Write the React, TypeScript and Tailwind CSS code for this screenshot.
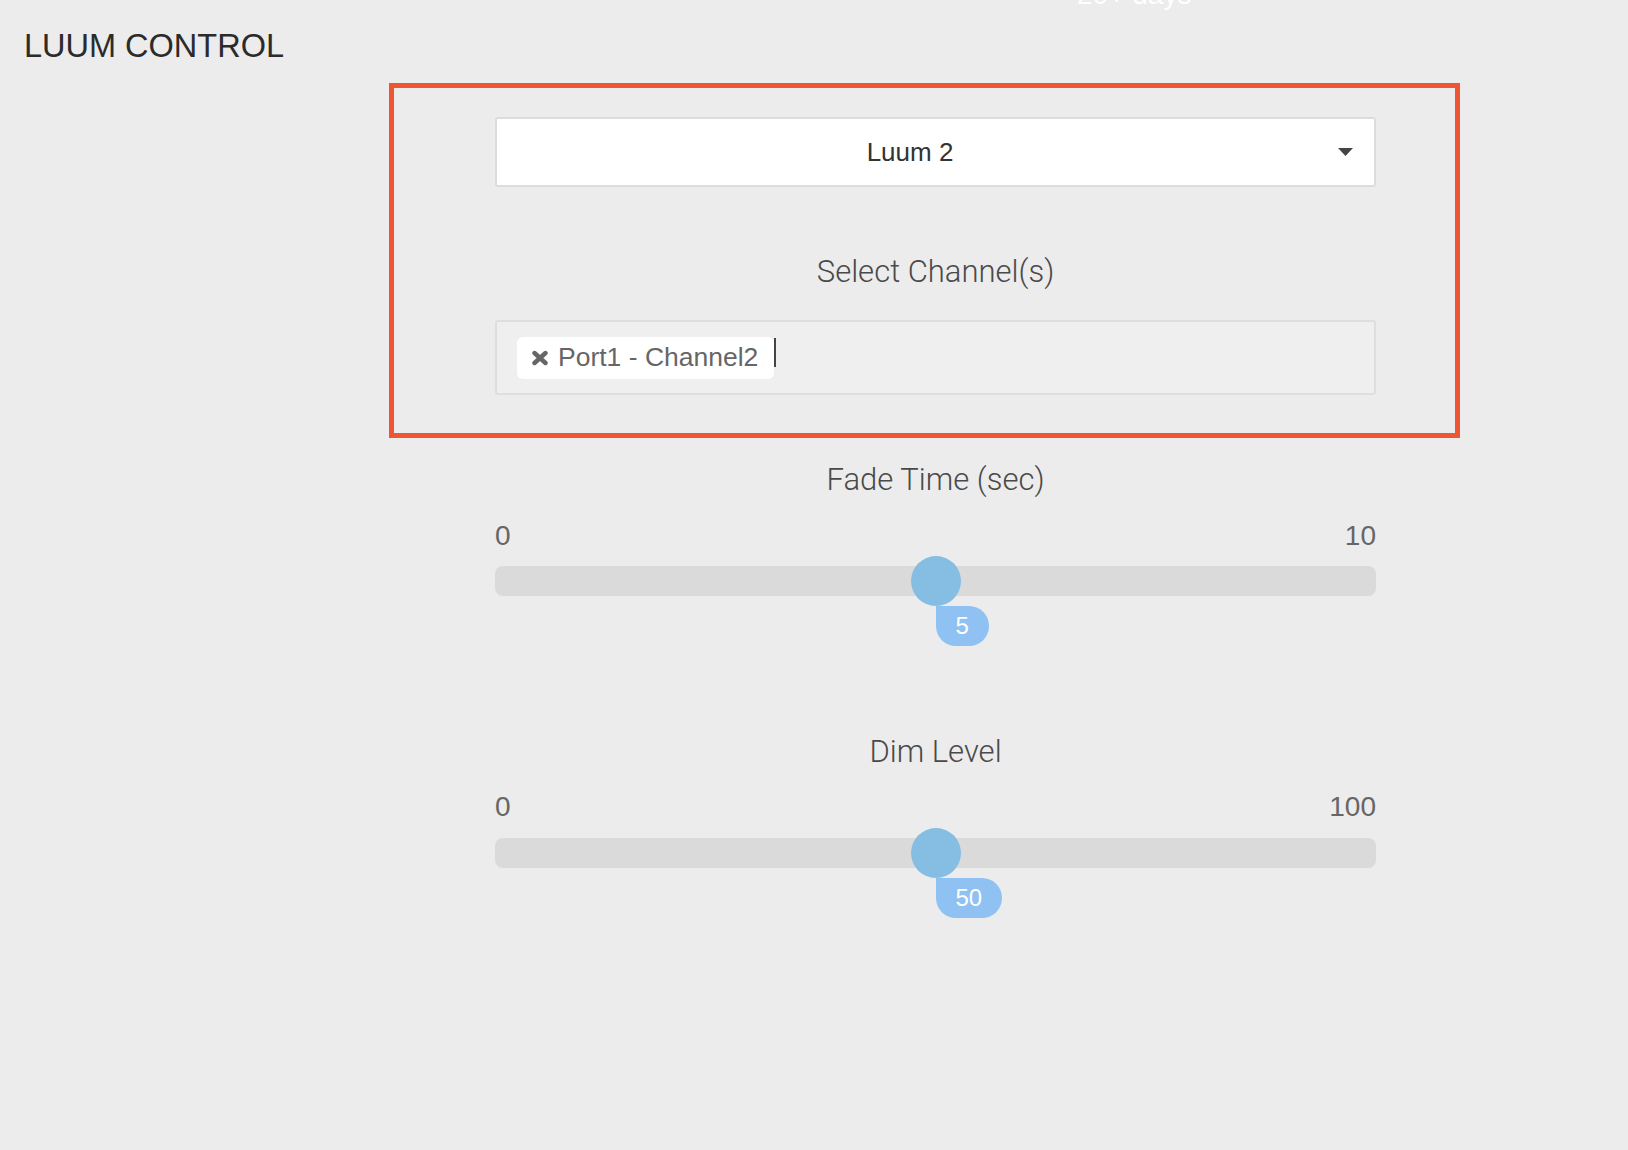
import React from "react";

function Slider({
  label,
  min,
  max,
  value,
  labelGap,
  trackGap,
}: {
  label: string;
  min: string;
  max: string;
  value: string;
  labelGap: string;
  trackGap: string;
}) {
  return (
    <div className="flex flex-col">
      <div className="text-center text-[31px] leading-[36px] font-light text-[#4a4a4a] [font-family:Roboto,'Liberation_Sans',sans-serif]">
        {label}
      </div>
      <div className={`flex justify-between text-[28px] leading-[32px] text-[#666] ${labelGap}`}>
        <span>{min}</span>
        <span>{max}</span>
      </div>
      <div className={`relative h-[30px] w-full rounded-lg bg-[#dadada] ${trackGap}`}>
        <div className="absolute left-1/2 top-1/2 h-[50px] w-[50px] -translate-x-1/2 -translate-y-1/2 rounded-full bg-[#85bde3]" />
        <div className="absolute left-1/2 top-[40px] flex h-[40px] items-center justify-center rounded-[0_20px_20px_20px] bg-[#8fc2f2] px-5 text-[24px] leading-none text-white">
          {value}
        </div>
      </div>
    </div>
  );
}

export default function App() {
  return (
    <div className="relative min-h-[1150px] w-full overflow-hidden bg-[#ececec] [font-family:'Liberation_Sans',Arial,sans-serif]">
      <div className="absolute left-[1077px] top-[-21px] text-[28px] leading-[32px] text-white">20+ days</div>

      <h1 className="pl-6 pt-[26px] text-[32.5px] font-normal leading-[40px] text-[#2b2b2b]">LUUM CONTROL</h1>

      <div className="ml-[389px] mt-[17px] w-[1071px] border-[5px] border-[#ee5533] pb-[38px] pl-[101px] pr-[79px] pt-[29px]">
        <div className="flex h-[70px] items-center rounded-[3px] border-2 border-[#dcdcdc] bg-white pl-3 pr-[21px]">
          <span className="flex-1 text-center text-[26px] text-[#333]">Luum 2</span>
          <svg className="ml-[27px]" width="15" height="8" viewBox="0 0 15 8">
            <path d="M0 0 H15 L7.5 8 Z" fill="#444" />
          </svg>
        </div>

        <div className="mt-[67px] text-center text-[31px] leading-[36px] font-light text-[#4a4a4a] [font-family:Roboto,'Liberation_Sans',sans-serif]">
          Select Channel(s)
        </div>

        <div className="mt-[30px] flex h-[75px] items-center rounded-[3px] border-2 border-[#dedede] bg-[#efefef] pl-5">
          <div className="flex h-[42px] items-center rounded-md bg-white pl-[14px] pr-4">
            <svg width="18" height="16" viewBox="0 0 18 16">
              <path d="M3.5 3 L14.5 13 M14.5 3 L3.5 13" stroke="#666" strokeWidth="4.4" strokeLinecap="round" />
            </svg>
            <span className="ml-[9px] text-[26.5px] leading-none text-[#666]">Port1 - Channel2</span>
          </div>
          <div className="mb-[11px] h-[29px] w-[2px] bg-[#444]" />
        </div>
      </div>

      <div className="ml-[495px] w-[881px] pt-[24px]">
        <Slider label="Fade Time (sec)" min="0" max="10" value="5" labelGap="mt-[22px]" trackGap="mt-[14px]" />
        <div className="mt-[138px]">
          <Slider label="Dim Level" min="0" max="100" value="50" labelGap="mt-[21px]" trackGap="mt-[15px]" />
        </div>
      </div>
    </div>
  );
}
